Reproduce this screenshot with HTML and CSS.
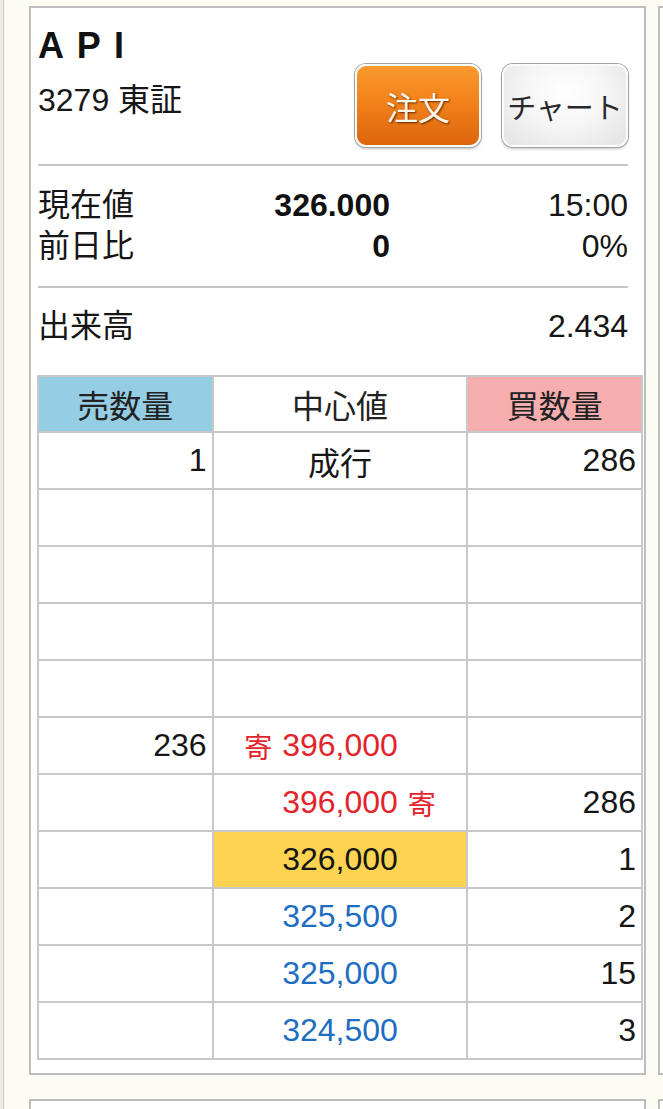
FILE: index.html
```html
<!DOCTYPE html>
<html lang="ja">
<head>
<meta charset="utf-8">
<title>API 3279</title>
<link rel="stylesheet" href="styles.css">
</head>
<body>
<div class="page">
  <div class="rail"></div>
  <div class="grid">
    <section class="card">
      <header class="head">
        <div class="ident">
          <h1 class="title">A P I</h1>
          <div class="code">3279 東証</div>
        </div>
        <div class="actions">
          <button class="btn btn-order">注文</button>
          <button class="btn btn-chart">チャート</button>
        </div>
      </header>
      <div class="info">
        <div class="info-row"><span class="lbl">現在値</span><span class="mid">326.000</span><span class="end">15:00</span></div>
        <div class="info-row"><span class="lbl">前日比</span><span class="mid">0</span><span class="end">0%</span></div>
      </div>
      <div class="info volume">
        <div class="info-row"><span class="lbl">出来高</span><span class="mid"></span><span class="end">2.434</span></div>
      </div>
      <table class="board">
        <colgroup><col class="c-side"><col class="c-center"><col class="c-side"></colgroup>
        <thead>
          <tr><th class="sell">売数量</th><th>中心値</th><th class="buy">買数量</th></tr>
        </thead>
        <tbody>
          <tr><td class="num">1</td><td class="price">成行</td><td class="num">286</td></tr>
          <tr><td class="num"></td><td class="price"></td><td class="num"></td></tr>
          <tr><td class="num"></td><td class="price"></td><td class="num"></td></tr>
          <tr><td class="num"></td><td class="price"></td><td class="num"></td></tr>
          <tr><td class="num"></td><td class="price"></td><td class="num"></td></tr>
          <tr><td class="num">236</td><td class="price red"><span class="pw"><span class="yori yl">寄</span><span>396,000</span><span></span></span></td><td class="num"></td></tr>
          <tr><td class="num"></td><td class="price red"><span class="pw"><span></span><span>396,000</span><span class="yori yr">寄</span></span></td><td class="num">286</td></tr>
          <tr><td class="num"></td><td class="price current">326,000</td><td class="num">1</td></tr>
          <tr><td class="num"></td><td class="price blue">325,500</td><td class="num">2</td></tr>
          <tr><td class="num"></td><td class="price blue">325,000</td><td class="num">15</td></tr>
          <tr><td class="num"></td><td class="price blue">324,500</td><td class="num">3</td></tr>
        </tbody>
      </table>
    </section>
    <section class="card card-side"></section>
    <section class="card card-next"></section>
    <section class="card card-next"></section>
  </div>
</div>
</body>
</html>
```

FILE: styles.css
```css
html, body {
  margin: 0;
  padding: 0;
  overflow: hidden;
}
body {
  background: #fcfcf5;
  font-family: "Liberation Sans", "Noto Sans CJK JP", sans-serif;
  color: #161616;
}
.page {
  display: flex;
  height: 1109px;
  overflow: hidden;
}
.rail {
  flex: 0 0 3px;
  background: #ecece2;
  border-right: 1px solid #c9c9c0;
}
.grid {
  display: grid;
  grid-template-columns: 617px 617px;
  column-gap: 12px;
  row-gap: 24px;
  padding: 6px 0 0 25px;
  align-content: start;
}
.card {
  background: #fff;
  border: 2px solid #bdbdbd;
  padding: 0 1px 13px 6px;
}
.card-next {
  min-height: 200px;
}

/* header */
.head {
  height: 156px;
  margin: 0 15px 0 1px;
  display: flex;
  justify-content: space-between;
}
.ident {
  padding-top: 17px;
}
.title {
  margin: 0;
  font-size: 36px;
  line-height: 41px;
  font-weight: bold;
  letter-spacing: 2px;
  color: #111;
}
.code {
  margin-top: 15px;
  font-size: 32px;
  line-height: 38px;
}
.actions {
  padding-top: 56px;
  display: flex;
  gap: 21px;
  align-items: flex-start;
}
.btn {
  width: 126px;
  height: 83px;
  border-radius: 11px;
  border: 2px solid #fbfbfb;
  box-shadow: 0 0 0 1px #a3a3a3, 0 2px 3px rgba(0,0,0,0.25);
  font-family: "Noto Sans CJK JP", sans-serif;
  padding: 0;
  margin: 0;
}
.btn-order {
  background: linear-gradient(#fa9a2e 0%, #f2821a 45%, #dc640c 100%);
  color: #fff6ea;
  font-size: 32px;
  text-shadow: 1px 1px 2px rgba(60,20,0,0.8);
}
.btn-chart {
  background: radial-gradient(ellipse at 50% 35%, #ffffff 0%, #f6f6f6 45%, #e2e2e2 100%);
  color: #2a2a2a;
  font-size: 29px;
}

/* info */
.info {
  margin: 0 15px 0 1px;
  border-top: 2px solid #c6c6c6;
  padding: 19px 0 19px;
}
.info-row {
  display: grid;
  grid-template-columns: 120px 232px 1fr;
  font-size: 32px;
  line-height: 41px;
}
.info-row .mid {
  text-align: right;
  font-weight: bold;
  color: #111;
}
.info-row .end {
  text-align: right;
}
.volume {
  padding: 18px 0 28px;
}

/* board */
.board {
  width: 100%;
  border-collapse: collapse;
  font-size: 32px;
}
.c-side { width: 175px; }
.c-center { width: 255px; }
.board th, .board td {
  border: 2px solid #c8c8c8;
  padding: 0 5px;
}
.board thead tr { height: 56px; }
.board tbody tr { height: 57px; }
.board th {
  font-weight: normal;
  color: #222;
  text-align: center;
}
.board th.sell { background: #95cde4; }
.board th.buy { background: #f5adad; }
.board td.num {
  text-align: right;
}
.board td.price {
  text-align: center;
}
.red { color: #e3242b; }
.blue { color: #1d6ec2; }
.current { background: #fdd451; }
.pw {
  display: grid;
  grid-template-columns: 1fr auto 1fr;
  column-gap: 10px;
  align-items: center;
}
.yori {
  font-size: 28px;
}
.yl { justify-self: end; }
.yr { justify-self: start; }
```
